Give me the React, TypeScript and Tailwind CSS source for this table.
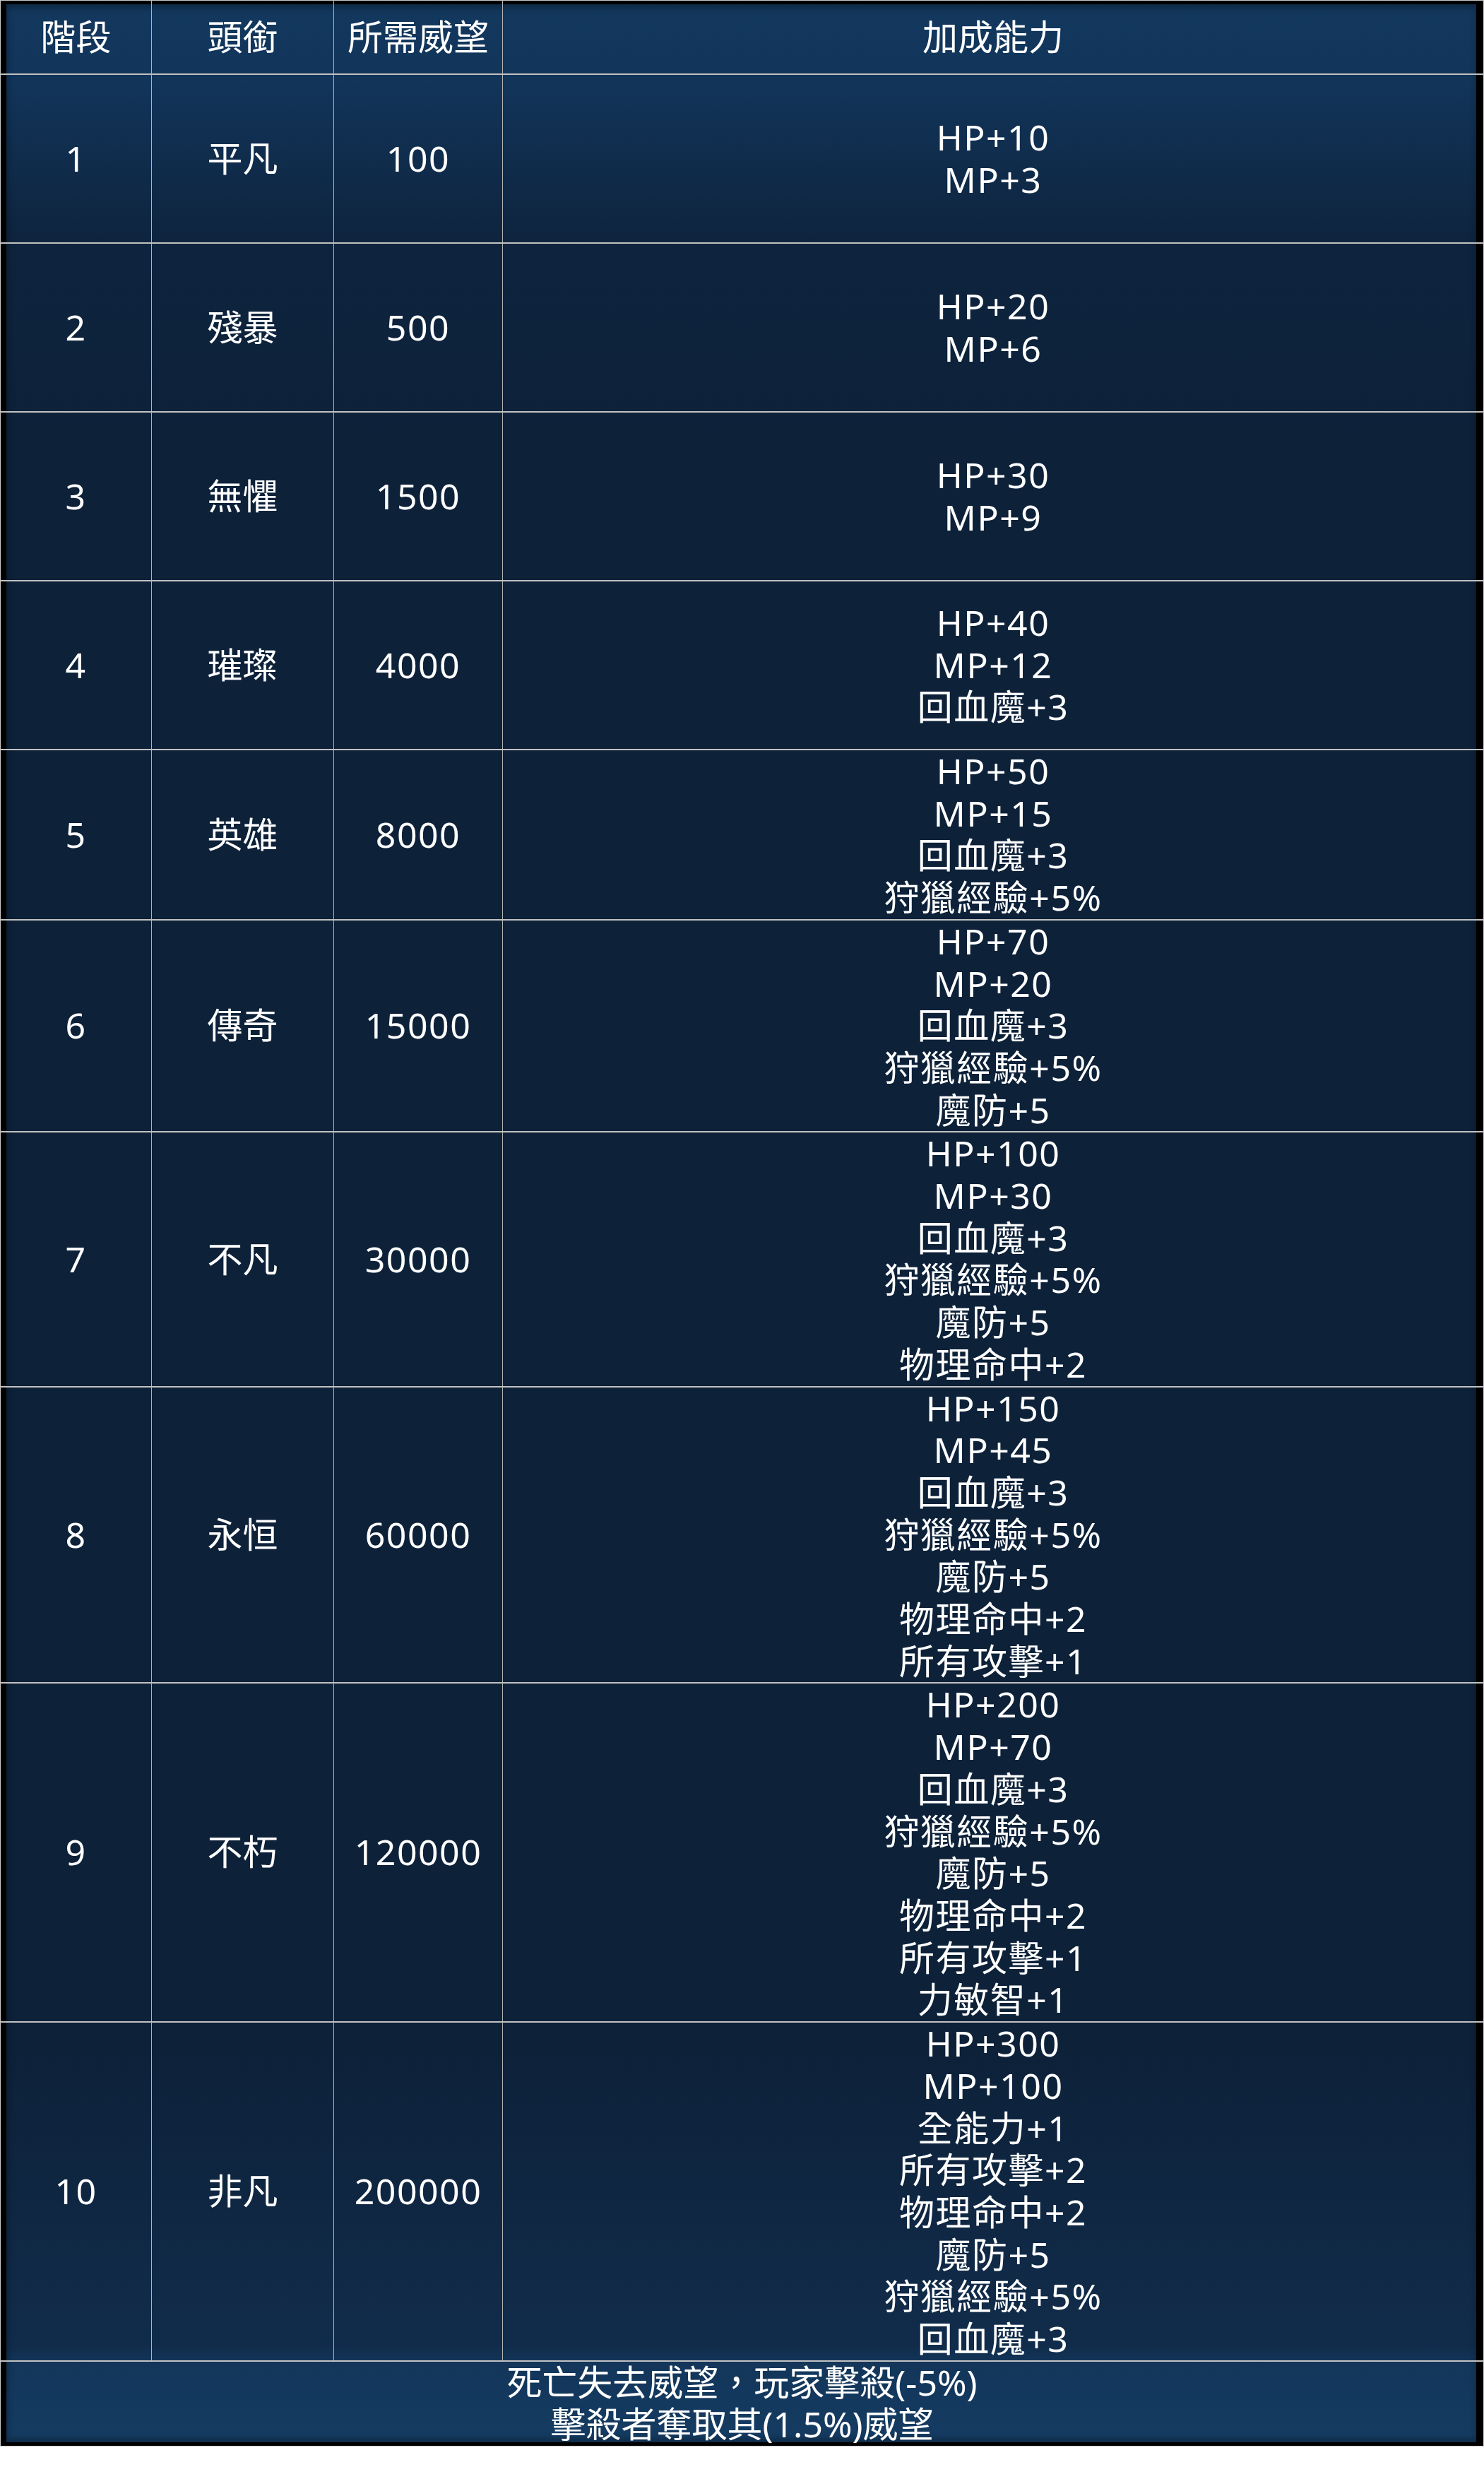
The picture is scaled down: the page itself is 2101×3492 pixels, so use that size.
const rows: { lv: string; title: string; need: string; bonus: string[] }[] = [
  { lv: "1", title: "平凡", need: "100", bonus: ["HP+10", "MP+3"] },
  { lv: "2", title: "殘暴", need: "500", bonus: ["HP+20", "MP+6"] },
  { lv: "3", title: "無懼", need: "1500", bonus: ["HP+30", "MP+9"] },
  { lv: "4", title: "璀璨", need: "4000", bonus: ["HP+40", "MP+12", "回血魔+3"] },
  { lv: "5", title: "英雄", need: "8000", bonus: ["HP+50", "MP+15", "回血魔+3", "狩獵經驗+5%"] },
  {
    lv: "6",
    title: "傳奇",
    need: "15000",
    bonus: ["HP+70", "MP+20", "回血魔+3", "狩獵經驗+5%", "魔防+5"],
  },
  {
    lv: "7",
    title: "不凡",
    need: "30000",
    bonus: ["HP+100", "MP+30", "回血魔+3", "狩獵經驗+5%", "魔防+5", "物理命中+2"],
  },
  {
    lv: "8",
    title: "永恒",
    need: "60000",
    bonus: ["HP+150", "MP+45", "回血魔+3", "狩獵經驗+5%", "魔防+5", "物理命中+2", "所有攻擊+1"],
  },
  {
    lv: "9",
    title: "不朽",
    need: "120000",
    bonus: [
      "HP+200",
      "MP+70",
      "回血魔+3",
      "狩獵經驗+5%",
      "魔防+5",
      "物理命中+2",
      "所有攻擊+1",
      "力敏智+1",
    ],
  },
  {
    lv: "10",
    title: "非凡",
    need: "200000",
    bonus: [
      "HP+300",
      "MP+100",
      "全能力+1",
      "所有攻擊+2",
      "物理命中+2",
      "魔防+5",
      "狩獵經驗+5%",
      "回血魔+3",
    ],
  },
]

const cell = "flex items-center justify-center border-r border-[#b3b3b3]"

export default function App() {
  return (
    <main className="min-h-screen bg-white">
      <div
        className="w-[2101px] border border-[#c9c9c9] bg-[linear-gradient(180deg,#13385e_0px,#12355a_110px,#0e243e_340px,#0d2139_620px,#0d2139_2900px,#112c4b_3320px,#13365a_3345px,#153c63_3462px)] font-['Noto_Sans','Noto_Sans_CJK_TC',sans-serif] text-[50px] leading-[59.7px] text-white shadow-[inset_8px_5px_0_#000,inset_-10px_-5px_0_#000,inset_0_0_10px_10px_rgba(0,0,0,0.3)]"
      >
        {/* header */}
        <div className="grid h-[103px] grid-cols-[214px_258px_239px_1fr]">
          <div className={cell}>階段</div>
          <div className={cell}>頭銜</div>
          <div className={cell}>所需威望</div>
          <div className="flex items-center justify-center">加成能力</div>
        </div>

        {rows.map((r) => (
          <div
            key={r.lv}
            className="grid min-h-[239px] grid-cols-[214px_258px_239px_1fr] border-t-2 border-[#c2c2c2]"
          >
            <div className={cell + " tracking-[1.5px]"}>{r.lv}</div>
            <div className={cell}>{r.title}</div>
            <div className={cell + " tracking-[1.5px]"}>{r.need}</div>
            <div className="flex flex-col items-center justify-center tracking-[1.5px]">
              {r.bonus.map((b, i) => (
                <div key={i}>{b}</div>
              ))}
            </div>
          </div>
        ))}

        {/* footer note */}
        <div className="flex h-[121px] flex-col items-center border-t-2 border-[#c2c2c2]">
          <div>死亡失去威望，玩家擊殺(-5%)</div>
          <div>擊殺者奪取其(1.5%)威望</div>
        </div>
      </div>
    </main>
  )
}
